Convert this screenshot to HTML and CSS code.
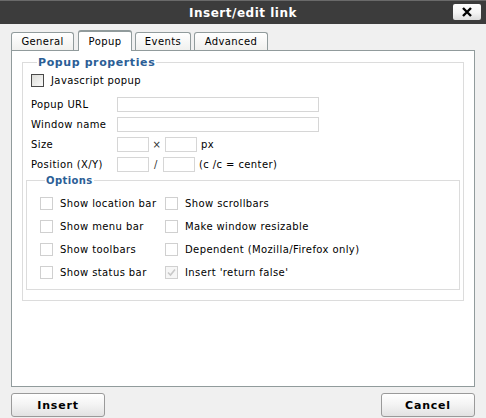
FILE: index.html
```html
<!DOCTYPE html>
<html>
<head>
<meta charset="utf-8">
<link rel="stylesheet" href="styles.css">
</head>
<body>
<div class="dialog">
  <div class="titlebar">
    <span class="title">Insert/edit link</span>
    <span class="close"><svg width="12" height="10" viewBox="0 0 12 10"><path d="M2 1 L10 9 M10 1 L2 9" stroke="#000" stroke-width="2.4"/></svg></span>
  </div>
  <div class="tabs">
    <span class="tab t-general">General</span>
    <span class="tab active t-popup">Popup</span>
    <span class="tab t-events">Events</span>
    <span class="tab t-adv">Advanced</span>
  </div>
  <div class="panel">
    <fieldset class="fs props">
      <legend>Popup properties</legend>
      <div class="row js"><span class="cb dark"></span><span>Javascript popup</span></div>
      <div class="row field"><span class="lbl">Popup URL</span><span class="inp wide"></span></div>
      <div class="row field"><span class="lbl">Window name</span><span class="inp wide"></span></div>
      <div class="row field"><span class="lbl">Size</span><span class="inp small"></span><span class="sep">×</span><span class="inp small"></span><span class="unit">px</span></div>
      <div class="row field"><span class="lbl">Position (X/Y)</span><span class="inp small"></span><span class="sep slash">/</span><span class="inp small"></span><span class="unit">(c /c = center)</span></div>
      <fieldset class="fs opts">
        <legend>Options</legend>
        <div class="grid">
          <div class="opt"><span class="cb"></span>Show location bar</div>
          <div class="opt"><span class="cb"></span>Show scrollbars</div>
          <div class="opt"><span class="cb"></span>Show menu bar</div>
          <div class="opt"><span class="cb"></span>Make window resizable</div>
          <div class="opt"><span class="cb"></span>Show toolbars</div>
          <div class="opt"><span class="cb"></span>Dependent (Mozilla/Firefox only)</div>
          <div class="opt"><span class="cb"></span>Show status bar</div>
          <div class="opt"><span class="cb checked"><svg width="11" height="11" viewBox="0 0 11 11"><path d="M2 5.5 L4.5 8 L9 2.5" fill="none" stroke="#c8c8c8" stroke-width="1.6"/></svg></span>Insert 'return false'</div>
        </div>
      </fieldset>
    </fieldset>
  </div>
  <div class="footer">
    <span class="btn">Insert</span>
    <span class="btn">Cancel</span>
  </div>
</div>
</body>
</html>
```
FILE: styles.css
```css
html, body {
  margin: 0;
  padding: 0;
}
body {
  width: 486px;
  height: 418px;
  background: #f0f0f0;
  font-family: "DejaVu Sans", Verdana, sans-serif;
  font-size: 10px;
  letter-spacing: 0.4px;
  color: #000;
  overflow: hidden;
}
.dialog {
  display: flex;
  flex-direction: column;
  height: 418px;
}
.titlebar {
  height: 24px;
  background: #3c3c3c;
  border-top: 1px solid #6a6a6a;
  box-sizing: border-box;
  display: flex;
  align-items: center;
  justify-content: center;
  position: relative;
}
.title {
  color: #fff;
  font-weight: bold;
  font-size: 12px;
  letter-spacing: 0.5px;
}
.close {
  position: absolute;
  right: 5px;
  top: 3px;
  width: 28px;
  height: 16px;
  background: linear-gradient(#ffffff, #f4f4f4 55%, #dcdcdc);
  border-radius: 2px;
  display: flex;
  align-items: center;
  justify-content: center;
}
.tabs {
  display: flex;
  align-items: flex-end;
  margin-top: 7px;
  padding-left: 11px;
  height: 19px;
  gap: 3px;
}
.tab {
  box-sizing: border-box;
  height: 18px;
  border: 1px solid #919b9c;
  border-bottom: none;
  border-radius: 3px 3px 0 0;
  background: linear-gradient(#ffffff, #f0f0ee);
  display: flex;
  align-items: center;
  justify-content: center;
  padding-top: 0;
}
.t-general { width: 63px; margin-right: 1px; }
.t-popup { width: 54px; }
.t-events { width: 56px; }
.t-adv { width: 74px; }
.tab.active {
  height: 21px;
  margin-bottom: -1px;
  background: #fff;
  border-top: 2px solid #919b9c;
  border-color: #919b9c;
  position: relative;
  z-index: 1;
  padding-top: 0;
}
.panel {
  box-sizing: border-box;
  margin: 0 11px;
  height: 337px;
  background: #fff;
  border: 1px solid #919b9c;
  padding: 5px 10px 0 10px;
}
.fs {
  margin: 0;
  border: 1px solid #dcdcdc;
  box-shadow: inset 1px 1px 0 #fff;
  padding: 0;
}
.fs legend {
  color: #2b5e96;
  font-weight: bold;
  font-size: 10px;
  padding: 0 1px;
}
.props {
  padding: 0 3px 10px 8px;
}
.props > legend {
  margin-left: 6px;
  font-size: 11px;
  letter-spacing: 0.6px;
}
.row {
  display: flex;
  align-items: center;
}
.js {
  height: 17px;
  margin-top: 3px;
  gap: 7px;
}
.field {
  height: 20px;
}
.field:nth-of-type(2) { margin-top: 5px; }
.lbl {
  width: 86px;
}
.inp {
  box-sizing: border-box;
  height: 15px;
  border: 1px solid #d6d6d6;
  background: #fff;
}
.wide { width: 202px; }
.small { width: 32px; }
.sep {
  width: 16px;
  text-align: center;
  color: #333;
}
.slash { width: 14px; }
.unit { margin-left: 4px; }
.cb {
  box-sizing: border-box;
  width: 13px;
  height: 13px;
  border: 1px solid #d0d0d0;
  background: #fff;
  display: inline-flex;
  align-items: center;
  justify-content: center;
  flex: none;
}
.cb.dark {
  border-color: #4a4a4a;
  background: linear-gradient(135deg, #dcdcd8, #fafafa);
}
.cb.checked {
  background: #f6f6f6;
}
.opts {
  margin: 1px 0 0 -5px;
  padding: 11px 0 10px 13px;
}
.opts legend {
  margin-left: 5px;
}
.grid {
  display: grid;
  grid-template-columns: 125px auto;
  row-gap: 10px;
}
.opt {
  display: flex;
  align-items: center;
  gap: 7px;
  height: 13px;
}
.footer {
  display: flex;
  justify-content: space-between;
  padding: 6px 11px 0 11px;
}
.btn {
  box-sizing: border-box;
  width: 94px;
  height: 24px;
  border: 1px solid #9a9a9a;
  border-radius: 3px;
  background: linear-gradient(#ffffff, #f3f3f3 50%, #e2e2e2);
  display: flex;
  align-items: center;
  justify-content: center;
  font-weight: bold;
  font-size: 11px;
  letter-spacing: 0.8px;
}
```
